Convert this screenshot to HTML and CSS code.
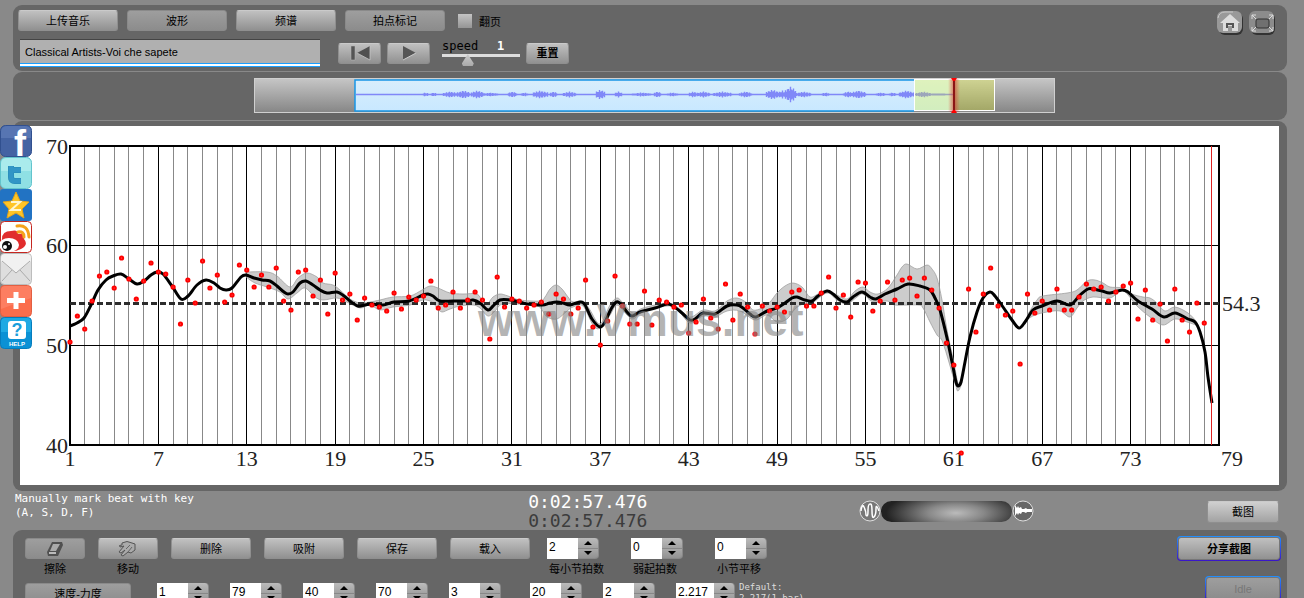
FILE: index.html
```html
<!DOCTYPE html>
<html lang="zh-CN">
  <head>
    <meta charset="UTF-8" />
    <meta name="viewport" content="width=device-width, initial-scale=1.0" />
    <title>Vmus.net</title>
    <link rel="stylesheet" href="styles.css">
  </head>
  <body>
    <nav class="share-bar">
      <a href="#" aria-label="Facebook">
        <svg viewBox="0 0 32 32">
          <rect x="0.5" y="0.5" width="31" height="31" rx="5" fill="#4463a3" stroke="#31508f" />
          <path d="M1 7q0-6 6-6h18q6 0 6 6v6H1z" fill="#6482bd" opacity="0.6" />
          <text x="14" y="31" class="logo-f">f</text>
        </svg>
      </a>
      <a href="#" aria-label="Twitter">
        <svg viewBox="0 0 32 32">
          <rect x="0.5" y="0.5" width="31" height="31" rx="5" fill="#8fe0e4" stroke="#62c4cd" />
          <path d="M1 7q0-6 6-6h18q6 0 6 6v7H1z" fill="#b5eff0" opacity="0.7" />
          <path d="M11 9v11q0 4 4 4h6M11 13h10" fill="none" stroke="#2488b5" stroke-width="6" stroke-linejoin="round" />
          <path d="M11 9v11q0 4 4 4h6M11 13h10" fill="none" stroke="#3195c6" stroke-width="5" stroke-linejoin="round" />
        </svg>
      </a>
      <a href="#" aria-label="Qzone">
        <svg viewBox="0 0 32 32">
          <rect width="32" height="32" rx="3" fill="#2273c3" />
          <path d="M16 3l4 9 9 1-7 7 2 9-8-5-9 5 2-9-6-7 9-1z" fill="#ffc526" stroke="#e2a31b" />
          <path d="M11 13h9l-9 8h10" fill="none" stroke="#fff6cf" stroke-width="2" />
        </svg>
      </a>
      <a href="#" aria-label="Weibo">
        <svg viewBox="0 0 32 32">
          <rect x="0.5" y="0.5" width="31" height="31" rx="4" fill="#fff" stroke="#c52620" />
          <path d="M2 18q0-8 9-8 7-2 7 3 7-1 6 5 5 6-3 10-8 4-16 1-6-3-3-11z" fill="#e12d2d" />
          <ellipse cx="9" cy="24" rx="10" ry="7" fill="#fff" />
          <circle cx="7" cy="25" r="5" fill="#111" />
          <circle cx="5" cy="26" r="2" fill="#fff" />
          <circle cx="9" cy="23" r="1" fill="#fff" />
          <path d="M17 5q11-2 12 11M18 11q6-1 6 5" fill="none" stroke="#f5a21c" stroke-width="3" stroke-linecap="round" />
        </svg>
      </a>
      <a href="#" aria-label="Email">
        <svg viewBox="0 0 32 32">
          <rect x="0.5" y="0.5" width="31" height="31" rx="4" fill="#dedede" stroke="#bdbdbd" />
          <path d="M1 5q0-4 4-4h22q4 0 4 4v3L16 20 1 8z" fill="#f1f1f1" />
          <path d="M2 8l14 12L30 8M2 28l10-11M30 28L20 17" fill="none" stroke="#aaa" />
        </svg>
      </a>
      <a href="#" aria-label="More">
        <svg viewBox="0 0 32 32">
          <rect x="0.5" y="0.5" width="31" height="31" rx="4" fill="#fb6d4c" stroke="#e25f42" />
          <path d="M1 5q0-4 4-4h22q4 0 4 4v8L1 24z" fill="#ff8b70" opacity="0.6" />
          <path d="M16 7v17M7 15.500h18" stroke="#fff" stroke-width="5" />
        </svg>
      </a>
      <a href="#" aria-label="Help">
        <svg viewBox="0 0 32 32">
          <rect x="0.5" y="0.5" width="31" height="31" rx="4" fill="#0b91d5" stroke="#057dbd" />
          <path d="M1 5q0-4 4-4h22q4 0 4 4v10H1z" fill="#28b4e8" opacity="0.7" />
          <rect x="8" y="4" width="18" height="18" rx="3" fill="#fff" />
          <text x="17" y="19" class="logo-q">?</text>
          <text x="17" y="29" class="logo-help">HELP</text>
        </svg>
      </a>
    </nav>

    <div class="page">
      <header class="panel top-panel">
        <div class="top-left">
          <div class="row tabs">
            <button class="btn btn-tab">上传音乐</button>
            <button class="btn btn-tab pressed">波形</button>
            <button class="btn btn-tab">频谱</button>
            <button class="btn btn-tab pressed">拍点标记</button>
            <label class="check"><input type="checkbox" /> 翻页</label>
          </div>
          <div class="row player">
            <input type="text" class="song-title" aria-label="Title" value="Classical Artists-Voi che sapete" />
            <div class="play-buttons">
              <button class="btn btn-play" aria-label="Rewind">
                <svg width="22" height="16" viewBox="0 0 22 16">
                  <path d="M2 1h4v14H2z" fill="#555" stroke="#bbb" stroke-width="0.5" />
                  <path d="M21 1v14L8 8z" fill="#505050" />
                  <path d="M21 1v14L8 8" fill="none" stroke="#c5c5c5" stroke-width="0.8" />
                </svg>
              </button>
              <button class="btn btn-play" aria-label="Play">
                <svg width="16" height="16" viewBox="0 0 16 16">
                  <path d="M2 1v14l13-7z" fill="#555" />
                  <path d="M2 15l13-7" stroke="#ccc" />
                </svg>
              </button>
            </div>
            <div class="speed">
              <label for="speed">speed</label>
              <output for="speed">1</output>
              <input type="range" id="speed" min="0" max="100" value="30" />
            </div>
            <button class="btn btn-play bold">重置</button>
          </div>
        </div>
        <div class="window-buttons">
          <button class="icon-btn" aria-label="Home">
            <svg viewBox="0 0 26 24">
              <rect x="2" y="2" width="24" height="22" rx="6" fill="#333" />
              <rect x="0" y="0" width="25" height="22" rx="6" fill="#999" />
              <path d="M1 7q1-6 7-6h8" fill="none" stroke="#c8c8c8" />
              <path d="M13 3L3 12h3v8h5v-5h4v5h6v-8h2z" fill="#ddd" />
              <path d="M9 12h8v5h-2v-3h-4v3H9z" fill="#555" />
            </svg>
          </button>
          <button class="icon-btn" aria-label="Full screen">
            <svg viewBox="0 0 26 24">
              <rect x="2" y="2" width="24" height="22" rx="6" fill="#333" />
              <rect x="0" y="0" width="25" height="22" rx="6" fill="#8c8c8c" />
              <rect x="7" y="8" width="13" height="9" rx="2" fill="#707070" stroke="#333" />
              <path d="M3 8V4h4M3 4l4 4M20 4h4v4M24 4l-4 4M3 16v4h4M3 20l4-4M20 20h4v-4M24 20l-4-4" fill="none" stroke="#ddd" />
            </svg>
          </button>
        </div>
      </header>

      <section class="panel overview-panel">
        <svg class="overview" viewBox="254 78 801 35">
          <defs>
            <linearGradient id="track" x1="0" y1="0" x2="0" y2="1">
              <stop offset="0" stop-color="#c6c6c6" />
              <stop offset="1" stop-color="#868686" />
            </linearGradient>
            <linearGradient id="glow">
              <stop offset="0" stop-color="#e33" stop-opacity="0" />
              <stop offset="0.5" stop-color="#c22" stop-opacity="0.6" />
              <stop offset="1" stop-color="#e33" stop-opacity="0" />
            </linearGradient>
            <linearGradient id="sky" x1="0" y1="0" x2="0" y2="1">
              <stop offset="0" stop-color="#d9eefc" />
              <stop offset="1" stop-color="#c8e8ff" />
            </linearGradient>
          </defs>
          <rect x="254.500" y="78.500" width="800" height="34" fill="url(#track)" stroke="#d0d0d0" />
          <path d="M355 80H954V111H355z" fill="url(#sky)" />
          <path d="M914 80H355V111H914" fill="none" stroke="#1795e6" stroke-width="1.500" />
          <path id="wave" fill="none" stroke="#8088f8" stroke-width="1.400" />
          <rect x="914.500" y="79.500" width="80" height="31" fill="#f0ff00" fill-opacity="0.25" stroke="#fff" />
          <rect x="948" y="79" width="12" height="33" fill="url(#glow)" />
          <path d="M954 79v33" stroke="#8b1515" stroke-width="2" />
          <path d="M951 78h6l-2 3h-2zM951 113h6l-2-3h-2z" fill="#f00" />
        </svg>
      </section>

      <main class="panel chart-panel">
        <svg class="chart" viewBox="20 126 1259 359">
          <g id="grid"></g>
          <g id="labels"></g>
          <g id="bands"></g>
          <path d="M70 303.500H1219" class="mean" />
          <path id="curve" class="curve" />
          <g id="beats"></g>
          <text x="478" y="336" class="watermark">www.Vmus.net</text>
          <path d="M1211.500 146V445" class="cursor" />
        </svg>
      </main>

      <section class="status">
        <p class="hint">Manually mark beat with key<br />(A, S, D, F)</p>
        <div class="time">
          <div>0:02:57.476</div>
          <div class="time-total">0:02:57.476</div>
        </div>
        <div class="mix">
          <svg width="22" height="22" viewBox="0 0 22 22">
            <circle cx="11" cy="11" r="10" fill="#777" stroke="#ddd" />
            <path d="M2 11q1-8 3-4t2 8q2 3 2-4t2-7q2-1 2 7t2 6q2-2 2-8t3 2" fill="none" stroke="#fff" stroke-width="1.500" />
          </svg>
          <input type="range" class="mix-range" aria-label="Mix" />
          <svg width="22" height="22" viewBox="0 0 22 22">
            <circle cx="11" cy="11" r="10" fill="#666" stroke="#ddd" />
            <path d="M3 5l2 3 1-2 1 2 2-1 1 2h2l2-1 1 1h5v3h-5l-1 1-2-1h-2l-1 2-2-1-1 2-1-2-2 3z" fill="#fff" />
          </svg>
        </div>
        <button class="btn btn-shot">截图</button>
      </section>

      <section class="panel tools-panel">
        <div class="tools">
          <div class="row tool-row">
            <div class="tool">
              <button class="btn btn-tool pressed" id="erase">
                <svg width="18" height="16" viewBox="0 0 18 16">
                  <path d="M6 1h10l1 3-5 11H2l-1-4z" fill="#505050" />
                  <path d="M7 3h7l-4 7H4z" fill="#aaa" />
                  <path d="M3 11h7v2H3z" fill="#bbb" />
                </svg>
              </button>
              <label for="erase">擦除</label>
            </div>
            <div class="tool">
              <button class="btn btn-tool" id="move">
                <svg width="20" height="16" viewBox="0 0 20 16">
                  <path d="M4 2q5-3 10 0l3 1v6l-4 3-3-1-5 4-2-1 4-5-4 3-2-1 5-6-4 1q-2-2 2-2z" fill="#aaa" stroke="#555" />
                  <path d="M8 8l4-4M10 11l4-5" stroke="#666" />
                </svg>
              </button>
              <label for="move">移动</label>
            </div>
            <button class="btn btn-action">删除</button>
            <button class="btn btn-action">吸附</button>
            <button class="btn btn-action">保存</button>
            <button class="btn btn-action">载入</button>
            <div class="spinners spinners-wide">
              <div class="field">
                <div class="spinner">
                  <input type="text" id="beats-per-bar" value="2" />
                  <div class="steps"><button aria-label="Up"></button><button aria-label="Down"></button></div>
                </div>
                <label for="beats-per-bar">每小节拍数</label>
              </div>
              <div class="field">
                <div class="spinner">
                  <input type="text" id="pickup" value="0" />
                  <div class="steps"><button aria-label="Up"></button><button aria-label="Down"></button></div>
                </div>
                <label for="pickup">弱起拍数</label>
              </div>
              <div class="field">
                <div class="spinner">
                  <input type="text" id="bar-shift" value="0" />
                  <div class="steps"><button aria-label="Up"></button><button aria-label="Down"></button></div>
                </div>
                <label for="bar-shift">小节平移</label>
              </div>
            </div>
          </div>
          <div class="row range-row">
            <button class="btn btn-mode pressed">速度-力度</button>
            <div class="spinners">
              <div class="spinner">
                <input type="text" aria-label="Start bar" value="1" />
                <div class="steps"><button aria-label="Up"></button><button aria-label="Down"></button></div>
              </div>
              <div class="spinner">
                <input type="text" aria-label="End bar" value="79" />
                <div class="steps"><button aria-label="Up"></button><button aria-label="Down"></button></div>
              </div>
              <div class="spinner">
                <input type="text" aria-label="Lowest tempo" value="40" />
                <div class="steps"><button aria-label="Up"></button><button aria-label="Down"></button></div>
              </div>
              <div class="spinner">
                <input type="text" aria-label="Highest tempo" value="70" />
                <div class="steps"><button aria-label="Up"></button><button aria-label="Down"></button></div>
              </div>
              <div class="spinner">
                <input type="text" aria-label="Line width" value="3" />
                <div class="steps"><button aria-label="Up"></button><button aria-label="Down"></button></div>
              </div>
            </div>
            <div class="spinners">
              <div class="spinner">
                <input type="text" aria-label="Font size" value="20" />
                <div class="steps"><button aria-label="Up"></button><button aria-label="Down"></button></div>
              </div>
              <div class="spinner">
                <input type="text" aria-label="Dot size" value="2" />
                <div class="steps"><button aria-label="Up"></button><button aria-label="Down"></button></div>
              </div>
              <div class="spinner spinner-long">
                <input type="text" aria-label="Smoothing" value="2.217" />
                <div class="steps"><button aria-label="Up"></button><button aria-label="Down"></button></div>
              </div>
            </div>
            <p class="default">Default:<br />2.217(1 bar)</p>
          </div>
        </div>
        <div class="share">
          <div class="ring"><button class="btn btn-share bold">分享截图</button></div>
          <div class="ring"><button class="btn btn-idle pressed" disabled>Idle</button></div>
        </div>
      </section>
    </div>
    <script src="script.js"></script>
  </body>
</html>
```
FILE: styles.css
```css
* {
  box-sizing: border-box;
}

body {
  margin: 0;
  height: 100vh;
  overflow: hidden;
  background: #898989;
  color: #000;
  font-family: "Liberation Sans", "Noto Sans CJK SC", sans-serif;
  font-size: 11px;
}

p {
  margin: 0;
}

button,
input {
  font: inherit;
  color: inherit;
}

svg {
  display: block;
}

.page {
  display: flex;
  flex-direction: column;
  gap: 1px;
  padding: 5px 17px 0 13px;
}

.panel {
  background: #666;
  border-radius: 9px;
}

.row {
  display: flex;
}

/* buttons */
.btn {
  display: flex;
  align-items: center;
  justify-content: center;
  height: 21px;
  padding: 0;
  border: 1px solid #8f8f8f;
  border-top-color: #cacaca;
  border-radius: 3px;
  background: linear-gradient(#c0c0c0, #919191);
  line-height: 16px;
}

.btn.pressed {
  border-color: #8a8a8a;
  background: linear-gradient(#9e9e9e, #8c8c8c);
}

.bold {
  font-weight: bold;
}

.btn-tab {
  width: 100px;
}

.btn-play {
  width: 43px;
}

.btn-tool {
  width: 60px;
}

.btn-action {
  width: 80px;
}

.btn-mode {
  width: 106px;
}

.btn-shot {
  width: 72px;
  height: 22px;
  margin-top: 9px;
  background: linear-gradient(#d0d0d0, #a2a2a2);
}

/* top */
.top-panel {
  display: flex;
  justify-content: space-between;
  height: 66px;
  padding: 5px 12px 0 5px;
}

.tabs {
  gap: 9px;
}

.check {
  display: flex;
  align-items: center;
  gap: 7px;
  margin-left: 4px;
}

.check input {
  appearance: none;
  width: 14px;
  height: 14px;
  margin: 0;
  background: linear-gradient(#c4c4c4, #959595);
}

.player {
  align-items: center;
  margin: 8px 0 0 2px;
}

.song-title {
  width: 300px;
  height: 28px;
  padding: 0 5px 3px;
  border: 0;
  border-top: 1px solid #444;
  border-bottom: 1px solid #1a9fff;
  background: #b0b0b0;
  box-shadow: inset 0 -2px #fff, inset 0 -3px #1a9fff;
}

.play-buttons {
  display: flex;
  gap: 6px;
  margin-left: 18px;
}

.speed {
  display: grid;
  grid-template-columns: 55px 23px;
  margin: 0 6px 0 12px;
  font: 12px/14px "DejaVu Sans Mono", monospace;
}

.speed output {
  color: #fff;
  font-weight: bold;
}

.speed input {
  grid-column: span 2;
  appearance: none;
  width: 78px;
  height: 14px;
  margin: 0;
  background: linear-gradient(#ddd, #ddd) 0 1px / 100% 3px no-repeat;
}

.speed input::-webkit-slider-thumb {
  appearance: none;
  width: 12px;
  height: 12px;
  background: linear-gradient(#ccc, #aaa);
  clip-path: polygon(50% 0, 100% 80%, 90% 100%, 10% 100%, 0 80%);
}

.window-buttons {
  display: flex;
  gap: 6px;
  padding-top: 1px;
}

.icon-btn {
  width: 26px;
  height: 24px;
  padding: 0;
  border: 0;
  background: none;
}

/* overview */
.overview-panel {
  display: flex;
  justify-content: center;
  padding: 6px 0 7px 9px;
}

.overview {
  width: 63%;
  min-width: 801px;
}

/* chart */
.chart-panel {
  padding: 5px 8px 6px 7px;
}

.chart {
  width: 100%;
  height: auto;
  background: #fff;
}

.chart text {
  font-family: "Liberation Serif", serif;
  font-size: 22px;
  fill: #222;
}

.chart .watermark {
  font-family: "Liberation Sans", sans-serif;
  font-size: 46px;
  font-weight: bold;
  fill: #828282;
  fill-opacity: 0.6;
}

.grid-line {
  stroke: #888;
  shape-rendering: crispEdges;
}

.grid-line.major {
  stroke: #000;
}

.frame {
  fill: none;
  stroke: #000;
  stroke-width: 2;
}

.band {
  fill: #999;
  fill-opacity: 0.5;
  stroke: #999;
  stroke-opacity: 0.7;
}

.mean {
  stroke: #2c2c2c;
  stroke-width: 3;
  stroke-dasharray: 6 3;
}

.curve {
  fill: none;
  stroke: #000;
  stroke-width: 3;
}

.beat {
  fill: #f66;
  stroke: #f00;
  stroke-width: 2;
}

.cursor {
  stroke: #d22;
}

/* status */
.status {
  display: grid;
  grid-template-columns: 40.6% 26.2% 1fr auto;
  height: 37px;
  padding: 0 8px 0 2px;
}

.hint {
  color: #fff;
  font: 11px/14px "DejaVu Sans Mono", monospace;
}

.time {
  color: #fff;
  font: 18px/19px "DejaVu Sans Mono", monospace;
}

.time-total {
  color: #3c3c3c;
}

.mix {
  display: flex;
  align-items: center;
}

.mix-range {
  appearance: none;
  width: 131px;
  height: 21px;
  margin: 0;
  border-radius: 11px;
  background: radial-gradient(ellipse 70px 22px at 75px 12px, #bbb, #888 40%, #222);
}

.mix-range::-webkit-slider-thumb {
  appearance: none;
  width: 12px;
  height: 21px;
  background: none;
}

/* tools */
.tools-panel {
  display: flex;
  justify-content: space-between;
  padding: 8px 6px 20px 12px;
}

.tool-row {
  gap: 13px;
  height: 45px;
}

.tool {
  display: flex;
  flex-direction: column;
  align-items: center;
}

.tool label,
.field label {
  line-height: 20px;
}

.field label {
  padding-left: 2px;
  white-space: nowrap;
}

.field {
  width: 52px;
}

.spinners {
  display: flex;
  gap: 21px;
}

.spinners + .spinners {
  margin-left: 3px;
}

.spinners-wide {
  gap: 32px;
  margin-left: 4px;
}

.spinner {
  display: flex;
  width: 52px;
  height: 21px;
}

.spinner-long {
  width: 59px;
}

.spinner input {
  flex: 1;
  min-width: 0;
  padding: 0 2px 3px;
  border: 0;
  background: #fff;
  font-size: 12px;
}

.steps {
  display: flex;
  flex-direction: column;
  width: 21px;
}

.steps button {
  display: flex;
  flex: 1;
  align-items: center;
  justify-content: center;
  padding: 0;
  border: 1px solid #888;
  border-width: 0 1px 1px 0;
  border-radius: 0 4px 0 0;
  background: linear-gradient(#bbb, #a2a2a2);
}

.steps button::after {
  content: "";
  border: 4px solid transparent;
  border-top-width: 0;
  border-bottom-color: #000;
}

.steps button:last-child {
  border-radius: 0 0 4px 0;
  background: linear-gradient(#a8a8a8, #929292);
}

.steps button:last-child::after {
  border-width: 4px 4px 0;
  border-top-color: #000;
}

.range-row {
  gap: 26px;
}

.default {
  margin: -1px 0 0 -22px;
  color: #ddd;
  font: 9px/11px "DejaVu Sans Mono", monospace;
}

.share {
  display: flex;
  flex-direction: column;
  align-items: flex-end;
  gap: 15px;
  margin-top: -2px;
}

.ring {
  padding: 1px;
  border-radius: 4px;
  background: linear-gradient(#2291ff, #3a14c8);
}

.ring .btn {
  height: 23px;
  border-color: #777;
}

.btn-share {
  width: 102px;
}

.btn-idle {
  width: 74px;
  color: #777;
}

/* share icons, over the chart panel */
.share-bar {
  position: absolute;
  top: 125px;
  left: 0;
  width: 32px;
}

.share-bar svg {
  width: 32px;
  height: 32px;
}

.logo-f {
  fill: #fff;
  font: bold 36px "Liberation Sans", sans-serif;
}

.logo-q {
  fill: #1a9edb;
  font: bold 18px "Liberation Sans", sans-serif;
  text-anchor: middle;
}

.logo-help {
  fill: #fff;
  font: bold 6px "Liberation Sans", sans-serif;
  text-anchor: middle;
}
```
FILE: script.js
```js
const LEFT = 70;
const RIGHT = 1219;
const TOP = 146;
const BOTTOM = 445;
const BARS = 78;
const STEP = (RIGHT - LEFT) / BARS;

// one dot per beat, two beats in a bar
const beats = [
  342, 316, 329, 301, 276, 272, 288, 258, 279, 299, 281, 263, 272, 274, 287, 324,
  280, 303, 261, 288, 275, 302, 295, 265, 270, 287, 275, 287, 268, 301, 310, 272,
  270, 296, 280, 314, 273, 300, 294, 320, 298, 305, 307, 311, 293, 309, 297, 300,
  296, 281, 308, 305, 292, 308, 300, 292, 300, 339, 277, 307, 299, 301, 308, 305,
  302, 314, 294, 299, 314, 308, 280, 327, 345, 321, 276, 306, 324, 324, 291, 325,
  300, 302, 307, 305, 333, 322, 299, 318, 329, 284, 320, 294, 307, 334, 306, 311,
  307, 312, 292, 290, 306, 306, 293, 277, 308, 295, 317, 282, 283, 311, 301, 282,
  300, 280, 278, 296, 278, 290, 308, 343, 365, 453, 289, 332, 294, 268, 306, 315,
  311, 364, 294, 313, 301, 310, 289, 310, 310, 297, 284, 289, 287, 301, 292, 286,
  283, 319, 290, 320, 304, 341, 289, 320, 332, 303, 323,
];

const tempo = [
  [70, 326], [77, 323], [84, 318], [91, 305], [98, 290], [106, 280], [113, 276],
  [121, 274], [129, 279], [137, 284], [144, 281], [151, 275], [157, 272],
  [163, 274], [172, 286], [181, 299], [188, 296], [197, 285], [206, 280],
  [214, 283], [220, 288], [226, 290], [232, 288], [241, 277], [246, 275],
  [254, 278], [262, 280], [270, 281], [277, 286], [284, 292], [288, 294],
  [293, 292], [300, 283], [306, 281], [313, 285], [320, 290], [327, 293],
  [337, 292], [344, 296], [350, 301], [358, 306], [365, 305], [372, 304],
  [383, 305], [394, 302], [409, 301], [423, 295], [428, 294], [433, 296],
  [440, 301], [453, 301], [467, 301], [473, 300], [480, 303], [488, 310],
  [493, 306], [500, 300], [510, 300], [520, 302], [527, 304], [542, 305],
  [550, 303], [557, 302], [563, 303], [570, 305], [580, 302], [585, 305],
  [592, 319], [600, 327], [605, 322], [610, 311], [615, 303], [618, 302],
  [622, 305], [627, 312], [632, 316], [640, 312], [655, 308], [667, 304],
  [673, 306], [682, 313], [690, 320], [695, 319], [703, 313], [715, 314],
  [727, 306], [737, 305], [743, 308], [750, 314], [756, 317], [767, 311],
  [777, 308], [785, 303], [792, 298], [797, 297], [805, 300], [812, 301],
  [818, 296], [827, 291], [833, 294], [840, 300], [847, 302], [853, 297],
  [862, 292], [870, 297], [876, 299], [885, 294], [897, 289], [908, 284],
  [920, 286], [930, 290], [935, 298], [940, 310], [947, 338], [953, 367],
  [956, 382], [958, 386], [961, 382], [965, 362], [970, 337], [977, 312],
  [983, 298], [990, 292], [995, 296], [1003, 307], [1012, 320], [1019, 328],
  [1025, 322], [1033, 310], [1042, 306], [1057, 301], [1070, 305], [1080, 295],
  [1088, 289], [1093, 289], [1102, 291], [1110, 293], [1122, 290], [1128, 292],
  [1138, 301], [1152, 309], [1164, 317], [1175, 313], [1188, 319], [1195, 322],
  [1200, 332], [1205, 352], [1208, 377], [1212, 403],
];

const bands = [
  {
    upper: [
      [246, 272], [267, 272], [277, 276], [290, 287], [298, 278], [307, 273],
      [317, 277], [323, 283], [333, 285], [340, 290], [350, 299], [360, 303],
      [370, 302], [380, 300], [393, 297], [410, 296], [422, 290], [430, 286],
      [438, 288], [450, 293], [463, 294], [477, 294], [483, 302], [488, 303],
      [493, 297], [500, 294], [508, 296], [520, 300], [540, 301], [545, 297],
      [550, 289], [556, 285], [562, 289], [568, 297], [573, 302], [583, 301],
      [590, 310], [600, 324], [610, 305], [617, 298], [623, 303], [633, 313],
      [643, 308], [667, 303], [677, 307], [690, 317], [703, 310], [715, 311],
      [727, 301], [737, 298], [747, 303], [753, 310], [762, 308], [770, 302],
      [777, 293], [785, 286], [793, 283], [802, 287], [810, 297], [818, 294],
      [827, 290], [837, 295], [847, 299], [855, 291], [863, 287], [870, 292],
      [878, 294], [888, 288], [897, 275], [902, 267], [907, 264], [917, 269],
      [927, 265], [932, 269], [937, 278], [942, 300], [947, 330], [954, 363],
      [958, 383], [962, 381],
    ],
    lower: [
      [246, 277], [255, 283], [267, 287], [280, 292], [288, 299], [297, 293],
      [305, 288], [315, 297], [323, 300], [337, 298], [347, 302], [360, 308],
      [370, 305], [380, 310], [393, 307], [410, 305], [423, 300], [432, 302],
      [437, 308], [442, 312], [450, 309], [460, 306], [473, 305], [480, 308],
      [488, 316], [495, 311], [502, 304], [517, 304], [537, 306], [542, 310],
      [547, 317], [557, 319], [567, 311], [573, 307], [583, 306], [593, 325],
      [600, 328], [610, 315], [617, 305], [627, 315], [633, 319], [643, 312],
      [667, 306], [677, 309], [690, 323], [703, 316], [715, 317], [727, 311],
      [740, 311], [755, 320], [767, 315], [777, 322], [787, 319], [795, 309],
      [803, 304], [812, 303], [827, 293], [837, 300], [847, 304], [857, 297],
      [863, 294], [873, 302], [887, 301], [895, 305], [918, 305], [923, 308],
      [930, 322], [937, 335], [943, 343], [955, 383], [958, 391], [962, 383],
    ],
  },
  {
    upper: [
      [1028, 314], [1037, 300], [1043, 296], [1067, 293], [1077, 290],
      [1087, 281], [1095, 280], [1103, 283], [1110, 287], [1122, 288],
      [1132, 294], [1143, 297], [1150, 298], [1157, 303], [1165, 311],
      [1175, 307], [1188, 313], [1196, 321],
    ],
    lower: [
      [1028, 319], [1035, 315], [1047, 312], [1060, 311], [1070, 317],
      [1077, 308], [1083, 301], [1093, 297], [1110, 298], [1123, 291],
      [1137, 306], [1150, 317], [1163, 325], [1175, 319], [1187, 322],
      [1196, 325],
    ],
  },
];

// centre, half width, height
const bursts = [
  [425, 2, 2], [433, 2, 2], [450, 7, 3], [463, 6, 4], [477, 6, 4], [490, 7, 2],
  [512, 4, 3], [524, 3, 2], [540, 7, 4], [553, 3, 3], [569, 6, 3], [600, 4, 5],
  [618, 3, 3], [641, 9, 2], [657, 3, 3], [672, 5, 2], [693, 4, 3], [703, 6, 3],
  [722, 9, 3], [745, 6, 3], [772, 6, 5], [782, 4, 4], [790, 5, 8], [803, 7, 3],
  [825, 3, 2], [848, 5, 3], [858, 7, 4], [880, 4, 2], [892, 3, 2], [906, 7, 4],
  [923, 7, 3], [938, 6, 1],
];

function add(parent, tag, attrs, text) {
  const el = document.createElementNS("http://www.w3.org/2000/svg", tag);
  for (const key in attrs) {
    el.setAttribute(key, attrs[key]);
  }
  if (text !== undefined) {
    el.textContent = text;
  }
  parent.appendChild(el);
}

function smooth(points) {
  let d = "";
  for (let i = 0; i < points.length - 1; i++) {
    const p0 = points[i - 1] || points[i];
    const p1 = points[i];
    const p2 = points[i + 1];
    const p3 = points[i + 2] || p2;
    d += `C${p1[0] + (p2[0] - p0[0]) / 6} ${p1[1] + (p2[1] - p0[1]) / 6} `;
    d += `${p2[0] - (p3[0] - p1[0]) / 6} ${p2[1] - (p3[1] - p1[1]) / 6} `;
    d += `${p2[0]} ${p2[1]}`;
  }
  return d;
}

function drawGrid() {
  const grid = document.getElementById("grid");
  const labels = document.getElementById("labels");

  for (let i = 0; i <= BARS; i++) {
    const x = LEFT + i * STEP;
    const major = i % 6 === 0;
    add(grid, "path", {
      d: `M${Math.floor(x) + 0.5} ${TOP}V${BOTTOM}`,
      class: major ? "grid-line major" : "grid-line",
    });
    if (major) {
      add(labels, "text", { x: i === BARS ? x + 13 : x, y: 466, "text-anchor": "middle" }, i + 1);
    }
  }

  [70, 60, 50, 40].forEach((value, i) => {
    const y = Math.floor(TOP + (i * (BOTTOM - TOP)) / 3);
    add(grid, "path", { d: `M${LEFT} ${y + 0.5}H${RIGHT}`, class: "grid-line major" });
    add(labels, "text", { x: 68, y: y + 8, "text-anchor": "end" }, value);
  });

  add(grid, "rect", { x: LEFT, y: TOP, width: RIGHT - LEFT, height: BOTTOM - TOP, class: "frame" });
  add(labels, "text", { x: 1222, y: 311 }, "54.3");
}

function drawTempo() {
  bands.forEach((band) => {
    const back = band.lower.slice().reverse();
    add(document.getElementById("bands"), "path", {
      d: `M${band.upper[0]}${smooth(band.upper)}L${back[0]}${smooth(back)}Z`,
      class: "band",
    });
  });

  document.getElementById("curve").setAttribute("d", `M${tempo[0]}${smooth(tempo)}`);

  beats.forEach((y, i) => {
    add(document.getElementById("beats"), "circle", {
      cx: LEFT + (i * STEP) / 2,
      cy: y,
      r: 1.6,
      class: "beat",
    });
  });
}

function drawWave() {
  let d = "M356 94.500H954";
  bursts.forEach(([center, half, height]) => {
    for (let x = center - half; x <= center + half; x++) {
      const fade = 1 - Math.abs(x - center) / (half + 2);
      const h = Math.max(1, height * (0.4 + 0.6 * fade) * (0.75 + 0.25 * Math.sin(x * 2.3)));
      d += `M${x + 0.5} ${94.5 - h}V${94.5 + h}`;
    }
  });
  document.getElementById("wave").setAttribute("d", d);
}

drawGrid();
drawTempo();
drawWave();
```
